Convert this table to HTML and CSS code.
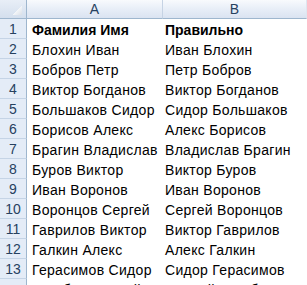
FILE: index.html
```html
<!DOCTYPE html>
<html>
<head>
<meta charset="utf-8">
<link rel="stylesheet" href="styles.css">
</head>
<body>
<div class="sheet">
  <div class="corner"></div>
  <div class="colhead">A</div>
  <div class="colhead last">B</div>

  <div class="rowhead">1</div><div class="cell a bold">Фамилия Имя</div><div class="cell b bold">Правильно</div>
  <div class="rowhead">2</div><div class="cell a">Блохин Иван</div><div class="cell b">Иван Блохин</div>
  <div class="rowhead">3</div><div class="cell a">Бобров Петр</div><div class="cell b">Петр Бобров</div>
  <div class="rowhead">4</div><div class="cell a">Виктор Богданов</div><div class="cell b">Виктор Богданов</div>
  <div class="rowhead">5</div><div class="cell a">Большаков Сидор</div><div class="cell b">Сидор Большаков</div>
  <div class="rowhead">6</div><div class="cell a">Борисов Алекс</div><div class="cell b">Алекс Борисов</div>
  <div class="rowhead">7</div><div class="cell a">Брагин Владислав</div><div class="cell b">Владислав Брагин</div>
  <div class="rowhead">8</div><div class="cell a">Буров Виктор</div><div class="cell b">Виктор Буров</div>
  <div class="rowhead">9</div><div class="cell a">Иван Воронов</div><div class="cell b">Иван Воронов</div>
  <div class="rowhead">10</div><div class="cell a">Воронцов Сергей</div><div class="cell b">Сергей Воронцов</div>
  <div class="rowhead">11</div><div class="cell a">Гаврилов Виктор</div><div class="cell b">Виктор Гаврилов</div>
  <div class="rowhead">12</div><div class="cell a">Галкин Алекс</div><div class="cell b">Алекс Галкин</div>
  <div class="rowhead">13</div><div class="cell a">Герасимов Сидор</div><div class="cell b">Сидор Герасимов</div>
  <div class="rowhead"></div><div class="cell a">Голубев Андрей</div><div class="cell b">Андрей Голубев</div>
</div>
</body>
</html>
```
FILE: styles.css
```css
html, body {
  margin: 0;
  padding: 0;
  background: #ffffff;
  overflow: hidden;
}

.sheet {
  display: grid;
  grid-template-columns: 27px 136px 144px;
  grid-template-rows: 19px repeat(14, 20px);
  font-family: "Liberation Sans", Arial, sans-serif;
  font-size: 14px;
  color: #000000;
}

.corner {
  background:
    linear-gradient(135deg, transparent 58%, #f3f5f8 58%, #d9dfe7 100%) 10px 5px / 12px 10px no-repeat,
    linear-gradient(#e8eef7, #d4dfee);
  border-right: 1px solid #9eb6ce;
  border-bottom: 1px solid #9eb6ce;
  box-sizing: border-box;
}

.colhead {
  background: linear-gradient(#f8fafd, #e9eff8 45%, #dae3f1);
  border-right: 1px solid #c6d3e4;
  border-bottom: 1px solid #9eb6ce;
  box-sizing: border-box;
  display: flex;
  align-items: center;
  justify-content: center;
  color: #27415f;
  font-size: 14px;
}

.colhead.last {
  border-right-color: #dfe6f0;
}

.rowhead {
  background: #e4ecf7;
  border-right: 1px solid #9eb6ce;
  border-bottom: 1px solid #c5d4e6;
  box-sizing: border-box;
  display: flex;
  align-items: center;
  justify-content: center;
  color: #27415f;
  padding-top: 1px;
}

.cell {
  white-space: nowrap;
  overflow: visible;
  display: flex;
  align-items: center;
  padding-top: 1px;
  box-sizing: border-box;
  letter-spacing: 0.3px;
}

.cell.a {
  padding-left: 5px;
}

.cell.b {
  padding-left: 2px;
}

.bold {
  font-weight: bold;
  letter-spacing: 0;
}
```
